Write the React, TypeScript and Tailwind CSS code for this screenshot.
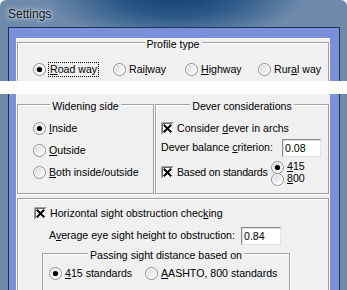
import React from "react";

function Radio({ checked }: { checked?: boolean }) {
  return (
    <svg width="13" height="13" viewBox="0 0 13 13" className="shrink-0">
      <defs>
        <linearGradient id="rg" x1="0" y1="0" x2="1" y2="1">
          <stop offset="0" stopColor="#d9d9d9" />
          <stop offset="1" stopColor="#ffffff" />
        </linearGradient>
      </defs>
      <circle cx="6.5" cy="6.5" r="6" fill="#fff" stroke="#8d8d8d" strokeWidth="1" />
      <circle cx="6.5" cy="6.5" r="4.6" fill="url(#rg)" />
      {checked && <circle cx="6.5" cy="6.5" r="2.6" fill="#000" />}
    </svg>
  );
}

function Check() {
  return (
    <svg width="13" height="13" viewBox="0 0 13 13" className="shrink-0">
      <rect x="0" y="0" width="13" height="13" fill="#ffffff" />
      <path d="M0.5 12.5 V0.5 H12.5" stroke="#a0a0a0" fill="none" />
      <path d="M1.5 11.5 V1.5 H11.5" stroke="#696969" fill="none" />
      <path d="M1.5 11.5 H11.5 V1.5" stroke="#e3e3e3" fill="none" />
      <rect x="2" y="2" width="9" height="9" fill="#fff" />
      <path d="M3.5 3.5 L9.5 9.5 M9.5 3.5 L3.5 9.5" stroke="#000" strokeWidth="2" strokeLinecap="square" />
    </svg>
  );
}

function Group({
  title,
  className,
  children,
}: {
  title?: string;
  className?: string;
  children?: React.ReactNode;
}) {
  return (
    <div
      className={
        "relative border border-[#a0a0a0] shadow-[1px_1px_0_#ffffff,inset_1px_1px_0_#ffffff] " +
        (className || "")
      }
    >
      {title && (
        <div className="absolute left-0 right-0 top-[-5px] flex justify-center">
          <span className="bg-[#f0f0f0] px-[2px] leading-[13px] whitespace-nowrap">{title}</span>
        </div>
      )}
      {children}
    </div>
  );
}

function Input({ value, className }: { value: string; className?: string }) {
  return (
    <div
      className={
        "h-[18px] shrink-0 bg-white border border-t-[#8c8c8c] border-l-[#8c8c8c] border-r-[#e3e3e3] border-b-[#e3e3e3] shadow-[inset_1px_1px_0_#e0e0e0] pl-[2px] flex items-center leading-[13px] " +
        (className || "")
      }
    >
      {value}
    </div>
  );
}

export default function App() {
  return (
    <div className="relative w-[347px] h-[290px] overflow-hidden bg-white font-['Liberation_Sans',Arial,sans-serif] text-[10.6px] text-black whitespace-nowrap">
      <div className="w-[347px] h-[320px] rounded-t-[6px] flex flex-col bg-[radial-gradient(ellipse_130px_45px_at_175px_-4px,#153f70_0%,#2b5888_45%,#6d8aab_100%)]">
        <div className="h-[27px] shrink-0 pl-[8px] flex items-center text-[12px] text-[#141414] [text-shadow:0_0_6px_#e2ebf4,0_0_3px_#e2ebf4]">
          Settings
        </div>
        <div className="flex-1 flex pl-[8px] pr-[7px]">
          <div className="flex-1 border border-[#1e3550] bg-[#7b8fdb] pl-[7px] pr-[9px] pt-[10px]">
            <div className="h-full bg-[#f0f0f0] border-t border-l border-white flex flex-col">
              {/* Profile type */}
              <Group title="Profile type" className="mt-[3px] h-[50px] w-[312px] shrink-0">
                <div className="flex pt-[19px] pl-[15px]">
                  <div className="w-[80px] h-[15px] flex items-center">
                    <Radio checked />
                    <span className="ml-[2px] border border-dotted border-black px-[1px] leading-[13px]">
                      <u className="underline-offset-[1px]">R</u>oad way
                    </span>
                  </div>
                  <div className="w-[72px] h-[15px] flex items-center gap-[3px]">
                    <Radio />
                    <span>
                      Rai<u className="underline-offset-[1px]">l</u>way
                    </span>
                  </div>
                  <div className="w-[73px] h-[15px] flex items-center gap-[3px]">
                    <Radio />
                    <span>
                      <u className="underline-offset-[1px]">H</u>ighway
                    </span>
                  </div>
                  <div className="h-[15px] flex items-center gap-[3px]">
                    <Radio />
                    <span>
                      Rur<u className="underline-offset-[1px]">a</u>l way
                    </span>
                  </div>
                </div>
              </Group>

              <div className="flex mt-[12px] h-[90px] shrink-0">
                {/* Widening side */}
                <Group title="Widening side" className="w-[137px] h-[90px] shrink-0">
                  <div className="flex flex-col gap-[7px] pt-[16px] pl-[15px]">
                    <div className="h-[15px] flex items-center gap-[3px]">
                      <Radio checked />
                      <span>
                        <u className="underline-offset-[1px]">I</u>nside
                      </span>
                    </div>
                    <div className="h-[15px] flex items-center gap-[3px]">
                      <Radio />
                      <span>
                        <u className="underline-offset-[1px]">O</u>utside
                      </span>
                    </div>
                    <div className="h-[15px] flex items-center gap-[3px]">
                      <Radio />
                      <span>
                        <u className="underline-offset-[1px]">B</u>oth inside/outside
                      </span>
                    </div>
                  </div>
                </Group>

                {/* Dever considerations */}
                <Group title="Dever considerations" className="ml-[1px] w-[174px] h-[90px] shrink-0">
                  <div className="flex flex-col pt-[16px] pl-[5px] pr-[7px]">
                    <div className="h-[15px] flex items-center gap-[3px]">
                      <Check />
                      <span>
                        Consider <u className="underline-offset-[1px]">d</u>ever in archs
                      </span>
                    </div>
                    <div className="mt-[3px] h-[18px] flex items-center justify-between">
                      <span>
                        Dever balance <u className="underline-offset-[1px]">c</u>riterion:
                      </span>
                      <Input value="0.08" className="w-[39px]" />
                    </div>
                    <div className="mt-[4px] h-[24px] flex items-center">
                      <div className="w-[110px] shrink-0 flex items-center gap-[3px]">
                        <Check />
                        <span className="tracking-[-0.2px]">Based on standards</span>
                      </div>
                      <div className="flex flex-col">
                        <div className="h-[12px] flex items-center gap-[3px]">
                          <Radio checked />
                          <span>
                            <u className="underline-offset-[1px]">4</u>15
                          </span>
                        </div>
                        <div className="h-[12px] flex items-center gap-[3px]">
                          <Radio />
                          <span>
                            <u className="underline-offset-[1px]">8</u>00
                          </span>
                        </div>
                      </div>
                    </div>
                  </div>
                </Group>
              </div>

              {/* Bottom section */}
              <Group className="mt-[4px] w-[312px] h-[110px] shrink-0">
                <div className="flex flex-col pt-[7px] pl-[16px]">
                  <div className="h-[15px] flex items-center gap-[3px]">
                    <Check />
                    <span>
                      Horizontal sight obstruction chec<u className="underline-offset-[1px]">k</u>ing
                    </span>
                  </div>
                  <div className="mt-[6px] ml-[15px] h-[18px] flex items-center">
                    <span className="w-[192px] shrink-0">
                      A<u className="underline-offset-[1px]">v</u>erage eye sight height to obstruction:
                    </span>
                    <Input value="0.84" className="w-[40px]" />
                  </div>
                  <Group
                    title="Passing sight distance based on"
                    className="mt-[8px] ml-[8px] w-[248px] h-[40px] shrink-0"
                  >
                    <div className="flex pt-[12px] pl-[6px]">
                      <div className="w-[96px] shrink-0 h-[15px] flex items-center gap-[3px]">
                        <Radio checked />
                        <span>
                          <u className="underline-offset-[1px]">4</u>15 standards
                        </span>
                      </div>
                      <div className="h-[15px] flex items-center gap-[3px]">
                        <Radio />
                        <span>
                          <u className="underline-offset-[1px]">A</u>ASHTO, 800 standards
                        </span>
                      </div>
                    </div>
                  </Group>
                </div>
              </Group>
            </div>
          </div>
        </div>
      </div>
      <div className="absolute left-0 right-0 top-[81px] h-[13px] bg-white" />
    </div>
  );
}
